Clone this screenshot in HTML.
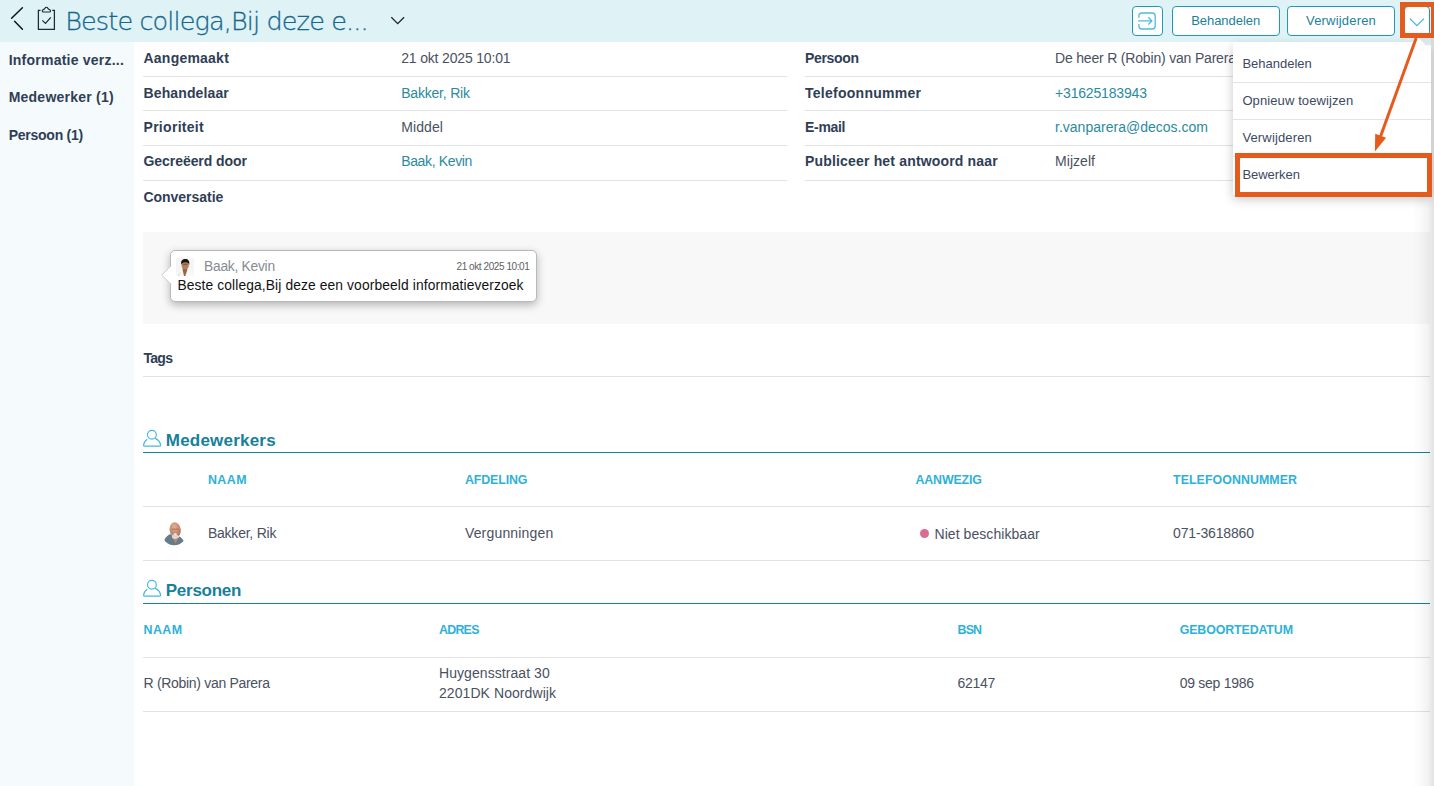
<!DOCTYPE html>
<html lang="nl">
<head>
<meta charset="utf-8">
<title>Informatie verzoek</title>
<style>
html,body{margin:0;padding:0;}
body{width:1434px;height:786px;overflow:hidden;position:relative;background:#fff;font-family:"Liberation Sans",sans-serif;}
.t{position:absolute;white-space:pre;line-height:normal;font-family:"Liberation Sans",sans-serif;}
.abs{position:absolute;}
.hl{position:absolute;height:1px;background:#e2e2e2;}
.tl{position:absolute;height:1.5px;background:#17809b;}
.btn{position:absolute;box-sizing:border-box;border:1px solid #1c9ab8;border-radius:4px;background:#fff;}
</style>
</head>
<body>
<!-- header -->
<div class="abs" id="hdr" style="left:0;top:0;width:1434px;height:41.5px;background:#dff3f7"></div>
<!-- sidebar -->
<div class="abs" id="side" style="left:0;top:41.5px;width:133.7px;height:745px;background:#f5fafd"></div>

<!-- header icons -->
<svg class="abs" style="left:0;top:0" width="420" height="42" viewBox="0 0 420 42" fill="none" stroke-linecap="round">
  <path d="M22.4 7.7 L11.6 18.2 M14.6 21.2 L22.4 29.2" stroke="#111" stroke-width="1.5"/>
  <path d="M40.5 10.4 H38.4 V29.3 H54.4 V10.4 H52.2" stroke="#1f2a2a" stroke-width="1.25" stroke-linecap="butt"/>
  <path d="M43.3 12 C41.9 12 41.9 9.9 43.3 9.6 C44.3 9.4 44.7 9.2 45 8.3 C45.5 6.9 47.3 6.9 47.8 8.3 C48.1 9.2 48.5 9.4 49.5 9.6 C50.9 9.9 50.9 12 49.5 12 Z" stroke="#1f2a2a" stroke-width="1.15"/>
  <path d="M42.3 20.4 L45.5 23.4 L50.8 17.4" stroke="#1f2a2a" stroke-width="1.25" stroke-linecap="butt"/>
  <path d="M391.3 17.2 L397.7 23.6 L404.1 17.2" stroke="#222" stroke-width="1.3" stroke-linecap="butt"/>
</svg>

<!-- header buttons -->
<div class="btn" style="left:1132px;top:6px;width:31.2px;height:30px"></div>
<svg class="abs" style="left:1132px;top:6px" width="31" height="30" viewBox="0 0 31 30" fill="none" stroke="#4fbcdd" stroke-width="1.3">
  <path d="M6.9 11.8 V10 Q6.9 7 9.9 7 H20.2 Q23.2 7 23.2 10 V20 Q23.2 23 20.2 23 H9.9 Q6.9 23 6.9 20 V17.9"/>
  <path d="M6.2 14.9 H19.6 M16.3 11.3 L19.9 14.9 L16.3 18.5"/>
</svg>
<div class="btn" style="left:1172px;top:6px;width:108px;height:30px"></div>
<div class="btn" style="left:1287px;top:6px;width:108px;height:30px"></div>
<div class="btn" style="left:1404px;top:6px;width:26.3px;height:30px"></div>
<svg class="abs" style="left:1404px;top:6px" width="27" height="30" viewBox="0 0 27 30" fill="none" stroke="#47b9dc" stroke-width="1.3">
  <path d="M5.8 12.6 L12.9 19.6 L20 12.6"/>
</svg>

<!-- detail row lines -->
<div class="hl" style="left:143px;width:644px;top:76px"></div>
<div class="hl" style="left:143px;width:644px;top:110px"></div>
<div class="hl" style="left:143px;width:644px;top:145px"></div>
<div class="hl" style="left:143px;width:644px;top:180px"></div>
<div class="hl" style="left:805px;width:625px;top:76px"></div>
<div class="hl" style="left:805px;width:625px;top:110px"></div>
<div class="hl" style="left:805px;width:625px;top:145px"></div>
<div class="hl" style="left:805px;width:625px;top:180px"></div>

<!-- conversation -->
<div class="abs" style="left:143px;top:232px;width:1287px;height:91.5px;background:#f8f8f8"></div>
<div class="abs" style="left:170px;top:250px;width:367px;height:51.5px;box-sizing:border-box;background:#fff;border:1px solid #b9b9b9;border-radius:5px;box-shadow:0 3px 8px rgba(0,0,0,.28)"></div>
<svg class="abs" style="left:158px;top:262px" width="16" height="26" viewBox="0 0 16 26">
  <path d="M13.5 3.5 L3.8 13 L13.5 22.5 Z" fill="#fff"/>
  <path d="M13 3.8 L3.8 13 L13 22.2" fill="none" stroke="#d0d0d0" stroke-width="1"/>
</svg>
<!-- avatar kevin -->
<svg class="abs" style="left:176px;top:258px" width="18" height="18" viewBox="0 0 18 18">
  <defs><filter id="bl1" x="-10%" y="-10%" width="120%" height="120%"><feGaussianBlur stdDeviation="0.35"/></filter></defs>
  <rect width="18" height="18" fill="#f5f5f5"/>
  <g filter="url(#bl1)">
    <path d="M0 18 V15 C1.5 13.2 4.5 12.3 6.6 11.4 L9 16 L11.2 11.6 C13.5 12.4 16.5 13.2 18 15.2 V18 Z" fill="#f8f8f8"/>
    <path d="M1 18 C2 15.5 3.5 14.5 5 13.6 L4 18 Z" fill="#e9e9ea"/>
    <path d="M6.8 9.6 H11.2 L11.3 12 L9.3 18 H8 L6.6 12 Z" fill="#9c6543"/>
    <ellipse cx="9.2" cy="7.2" rx="3.6" ry="4.1" fill="#b47f5f"/>
    <path d="M5.2 7 C4.5 2.6 6.8 1.1 9.3 1.1 C11.9 1.1 14 2.8 13.2 7 C12.8 5 12 4.2 9.3 4.2 C6.6 4.2 5.7 5 5.2 7 Z" fill="#17130f"/>
    <path d="M7 6.3 H11.4" stroke="#5a3a28" stroke-width=".7"/>
  </g>
</svg>

<!-- tags line -->
<div class="hl" style="left:143px;width:1287px;top:376px"></div>

<!-- section icons -->
<svg class="abs" style="left:142px;top:429px" width="20" height="19" viewBox="0 0 20 19" fill="none" stroke="#45badc" stroke-width="1.15">
  <circle cx="9.9" cy="5.7" r="4.4"/>
  <path d="M5.2 10.2 C3 11.8 1.7 14 1.5 16.3 Q1.5 17.1 2.3 17.1 H17.9 Q18.7 17.1 18.6 16.3 C18.3 13.4 16.4 10.8 13.2 9.4"/>
</svg>
<svg class="abs" style="left:142px;top:579px" width="20" height="19" viewBox="0 0 20 19" fill="none" stroke="#45badc" stroke-width="1.15">
  <circle cx="9.9" cy="5.7" r="4.4"/>
  <path d="M5.2 10.2 C3 11.8 1.7 14 1.5 16.3 Q1.5 17.1 2.3 17.1 H17.9 Q18.7 17.1 18.6 16.3 C18.3 13.4 16.4 10.8 13.2 9.4"/>
</svg>
<div class="tl" style="left:143px;width:1287px;top:451.7px"></div>
<div class="tl" style="left:143px;width:1287px;top:602.7px"></div>
<div class="hl" style="left:143px;width:1287px;top:506px"></div>
<div class="hl" style="left:143px;width:1287px;top:560px"></div>
<div class="hl" style="left:143px;width:1287px;top:657px"></div>
<div class="hl" style="left:143px;width:1287px;top:711px"></div>

<!-- avatar rik -->
<svg class="abs" style="left:160px;top:518px" width="28" height="30" viewBox="160 518 28 30">
  <defs>
    <filter id="bl2" x="-10%" y="-10%" width="120%" height="120%"><feGaussianBlur stdDeviation="0.45"/></filter>
    <radialGradient id="hg" cx=".45" cy=".28" r=".75"><stop offset="0" stop-color="#e0b095"/><stop offset=".55" stop-color="#c98d70"/><stop offset="1" stop-color="#a96f55"/></radialGradient>
    <clipPath id="cp2"><circle cx="174.2" cy="533" r="12.2"/></clipPath>
  </defs>
  <g filter="url(#bl2)" clip-path="url(#cp2)">
    <path d="M164.5 539.5 C166 536.5 168.5 535 170.5 534 L176 540 L179.5 536.5 C181.5 537.5 183 539.5 184 541.5 L184 548 H163 Z" fill="#657b8a"/>
    <path d="M172 537 L175.6 543.5 L178.5 538 Z" fill="#c08468"/>
    <ellipse cx="175.2" cy="529.8" rx="5.6" ry="7.6" fill="url(#hg)" transform="rotate(-8 175.2 529.8)"/>
    <path d="M171.6 529.2 H178.6" stroke="#8d5a44" stroke-width=".9" opacity=".7"/>
    <ellipse cx="175" cy="536.6" rx="3.1" ry="2.3" fill="#dcd7d1"/>
    <ellipse cx="175.3" cy="534.1" rx="1.7" ry=".8" fill="#f4efe9"/>
  </g>
</svg>
<!-- status dot -->
<div class="abs" style="left:920px;top:528.6px;width:9.4px;height:9.4px;border-radius:50%;background:#dc6b93"></div>

<span class="t" style="left:65.2px;top:6.0px;font-size:25.5px;font-weight:200;color:#17678c;letter-spacing:-0.870px;font-family:'DejaVu Sans','Liberation Sans',sans-serif;-webkit-text-stroke:.3px #17678c">Beste collega,Bij deze e...</span>
<span class="t" style="left:8.7px;top:51.9px;font-size:14px;font-weight:700;color:#2f3e55;letter-spacing:0.231px">Informatie verz...</span>
<span class="t" style="left:8.7px;top:88.9px;font-size:14px;font-weight:700;color:#2f3e55;letter-spacing:0.228px">Medewerker (1)</span>
<span class="t" style="left:8.7px;top:126.9px;font-size:14px;font-weight:700;color:#2f3e55;letter-spacing:-0.252px">Persoon (1)</span>
<span class="t" style="left:143.5px;top:50.2px;font-size:14px;font-weight:700;color:#2f3e55;letter-spacing:0.226px">Aangemaakt</span>
<span class="t" style="left:143.5px;top:85.1px;font-size:14px;font-weight:700;color:#2f3e55;letter-spacing:0.125px">Behandelaar</span>
<span class="t" style="left:143.5px;top:119.1px;font-size:14px;font-weight:700;color:#2f3e55;letter-spacing:0.291px">Prioriteit</span>
<span class="t" style="left:143.5px;top:153.4px;font-size:14px;font-weight:700;color:#2f3e55;letter-spacing:-0.059px">Gecreëerd door</span>
<span class="t" style="left:143.5px;top:188.8px;font-size:14px;font-weight:700;color:#2f3e55;letter-spacing:-0.036px">Conversatie</span>
<span class="t" style="left:401.2px;top:50.2px;font-size:14px;font-weight:400;color:#4a5160;letter-spacing:-0.169px">21 okt 2025 10:01</span>
<span class="t" style="left:401.2px;top:85.1px;font-size:14px;font-weight:400;color:#2b8a9d;letter-spacing:-0.201px">Bakker, Rik</span>
<span class="t" style="left:401.2px;top:119.1px;font-size:14px;font-weight:400;color:#4a5160;letter-spacing:0.110px">Middel</span>
<span class="t" style="left:401.2px;top:153.4px;font-size:14px;font-weight:400;color:#2b8a9d;letter-spacing:-0.352px">Baak, Kevin</span>
<span class="t" style="left:805.0px;top:50.2px;font-size:14px;font-weight:700;color:#2f3e55;letter-spacing:-0.336px">Persoon</span>
<span class="t" style="left:805.0px;top:85.1px;font-size:14px;font-weight:700;color:#2f3e55;letter-spacing:0.267px">Telefoonnummer</span>
<span class="t" style="left:805.0px;top:119.1px;font-size:14px;font-weight:700;color:#2f3e55;letter-spacing:-0.303px">E-mail</span>
<span class="t" style="left:805.0px;top:153.4px;font-size:14px;font-weight:700;color:#2f3e55;letter-spacing:0.171px">Publiceer het antwoord naar</span>
<span class="t" style="left:1055.0px;top:50.2px;font-size:14px;font-weight:400;color:#4a5160;letter-spacing:-0.185px">De heer R (Robin) van Parera</span>
<span class="t" style="left:1055.0px;top:85.1px;font-size:14px;font-weight:400;color:#2b8a9d;letter-spacing:-0.166px">+31625183943</span>
<span class="t" style="left:1055.0px;top:119.1px;font-size:14px;font-weight:400;color:#2b8a9d;letter-spacing:0.013px">r.vanparera@decos.com</span>
<span class="t" style="left:1055.0px;top:153.4px;font-size:14px;font-weight:400;color:#4a5160;letter-spacing:0.055px">Mijzelf</span>
<span class="t" style="left:143.5px;top:349.6px;font-size:14px;font-weight:700;color:#2f3e55;letter-spacing:-0.714px">Tags</span>
<span class="t" style="left:165.8px;top:431.2px;font-size:17px;font-weight:700;color:#17809b;letter-spacing:0.207px">Medewerkers</span>
<span class="t" style="left:165.8px;top:581.3px;font-size:17px;font-weight:700;color:#17809b;letter-spacing:-0.269px">Personen</span>
<span class="t" style="left:207.9px;top:473.3px;font-size:12.4px;font-weight:700;color:#2eb1d9;letter-spacing:0.509px">NAAM</span>
<span class="t" style="left:464.9px;top:473.3px;font-size:12.4px;font-weight:700;color:#2eb1d9;letter-spacing:-0.104px">AFDELING</span>
<span class="t" style="left:915.5px;top:473.3px;font-size:12.4px;font-weight:700;color:#2eb1d9;letter-spacing:-0.136px">AANWEZIG</span>
<span class="t" style="left:1173.0px;top:473.3px;font-size:12.4px;font-weight:700;color:#2eb1d9;letter-spacing:0.060px">TELEFOONNUMMER</span>
<span class="t" style="left:207.9px;top:524.9px;font-size:14px;font-weight:400;color:#4a5160;letter-spacing:-0.221px">Bakker, Rik</span>
<span class="t" style="left:464.9px;top:524.9px;font-size:14px;font-weight:400;color:#4a5160;letter-spacing:0.180px">Vergunningen</span>
<span class="t" style="left:934.5px;top:525.6px;font-size:14px;font-weight:400;color:#4a5160;letter-spacing:0.061px">Niet beschikbaar</span>
<span class="t" style="left:1173.0px;top:524.9px;font-size:14px;font-weight:400;color:#4a5160;letter-spacing:-0.153px">071-3618860</span>
<span class="t" style="left:143.5px;top:622.8px;font-size:12.4px;font-weight:700;color:#2eb1d9;letter-spacing:0.443px">NAAM</span>
<span class="t" style="left:439.0px;top:622.8px;font-size:12.4px;font-weight:700;color:#2eb1d9;letter-spacing:-0.744px">ADRES</span>
<span class="t" style="left:957.6px;top:622.8px;font-size:12.4px;font-weight:700;color:#2eb1d9;letter-spacing:-0.886px">BSN</span>
<span class="t" style="left:1179.7px;top:622.8px;font-size:12.4px;font-weight:700;color:#2eb1d9;letter-spacing:-0.120px">GEBOORTEDATUM</span>
<span class="t" style="left:143.5px;top:674.9px;font-size:14px;font-weight:400;color:#4a5160;letter-spacing:-0.304px">R (Robin) van Parera</span>
<span class="t" style="left:439.0px;top:664.9px;font-size:14px;font-weight:400;color:#4a5160;letter-spacing:0.064px">Huygensstraat 30</span>
<span class="t" style="left:439.0px;top:684.8px;font-size:14px;font-weight:400;color:#4a5160;letter-spacing:0.070px">2201DK Noordwijk</span>
<span class="t" style="left:957.6px;top:674.9px;font-size:14px;font-weight:400;color:#4a5160;letter-spacing:-0.334px">62147</span>
<span class="t" style="left:1179.7px;top:674.9px;font-size:14px;font-weight:400;color:#4a5160;letter-spacing:-0.278px">09 sep 1986</span>
<span class="t" style="left:204.1px;top:258.6px;font-size:13.8px;font-weight:400;color:#878c94;letter-spacing:-0.264px">Baak, Kevin</span>
<span class="t" style="left:456.5px;top:260.8px;font-size:10px;font-weight:400;color:#606060;letter-spacing:-0.430px">21 okt 2025 10:01</span>
<span class="t" style="left:177.4px;top:277.5px;font-size:13.8px;font-weight:400;color:#111;letter-spacing:0.120px">Beste collega,Bij deze een voorbeeld informatieverzoek</span>
<span class="t" style="left:1191.2px;top:12.8px;font-size:13px;font-weight:400;color:#1c7f9e;letter-spacing:-0.045px">Behandelen</span>
<span class="t" style="left:1306.0px;top:12.8px;font-size:13px;font-weight:400;color:#1c7f9e;letter-spacing:0.186px">Verwijderen</span>

<!-- right edge fade -->
<div class="abs" style="left:1412px;top:41.5px;width:22px;height:745px;background:linear-gradient(to right,rgba(0,0,0,0) 0%,rgba(0,0,0,.018) 40%,rgba(0,0,0,.05) 72%,rgba(0,0,0,.115) 100%)"></div>

<!-- dropdown menu -->
<div class="abs" id="menu" style="left:1233px;top:41.5px;width:198px;height:153px;background:#fff;box-shadow:0 4px 10px rgba(0,0,0,.22)"></div>
<div class="hl" style="left:1233px;width:198px;top:82px;background:#e4e4e4"></div>
<div class="hl" style="left:1233px;width:198px;top:119px;background:#e4e4e4"></div>
<div class="hl" style="left:1233px;width:198px;top:156px;background:#e4e4e4"></div>
<span class="t" style="left:1242.4px;top:55.8px;font-size:13px;font-weight:400;color:#3c4a5f;letter-spacing:-0.001px">Behandelen</span>
<span class="t" style="left:1242.4px;top:92.9px;font-size:13px;font-weight:400;color:#3c4a5f;letter-spacing:0.105px">Opnieuw toewijzen</span>
<span class="t" style="left:1242.4px;top:130.0px;font-size:13px;font-weight:400;color:#3c4a5f;letter-spacing:0.146px">Verwijderen</span>
<span class="t" style="left:1242.4px;top:167.2px;font-size:13px;font-weight:400;color:#3c4a5f;letter-spacing:-0.045px">Bewerken</span>

<!-- menu caret -->
<svg class="abs" style="left:1404px;top:34px" width="30" height="14" viewBox="1404 34 30 14">
  <defs><linearGradient id="cg" x1="0" y1="0" x2="0" y2="1"><stop offset="0" stop-color="#cfe9ee"/><stop offset="1" stop-color="#e6e6e6"/></linearGradient></defs>
  <path d="M1412 42 L1417.5 36.5 L1423 42 Z" fill="#fff"/>
  <path d="M1419 38 H1431 V45.3 H1425.6 Z" fill="url(#cg)"/>
  <rect x="1431" y="38" width="3" height="160" fill="#dadada"/>
</svg>
<!-- annotations -->
<svg class="abs" style="left:0;top:0" width="1434" height="786" viewBox="0 0 1434 786">
  <rect x="1402.5" y="4.5" width="31" height="31" fill="none" stroke="#e55b1d" stroke-width="5"/>
  <rect x="1237.5" y="155.5" width="192" height="39" fill="none" stroke="#e55b1d" stroke-width="5"/>
  <path d="M1416.2 38 L1380.6 136.2" stroke="#e55b1d" stroke-width="3" fill="none"/>
  <path d="M1374.9 151.5 L1375.2 133.8 L1386.1 137.8 Z" fill="#e55b1d"/>
</svg>
</body>
</html>
